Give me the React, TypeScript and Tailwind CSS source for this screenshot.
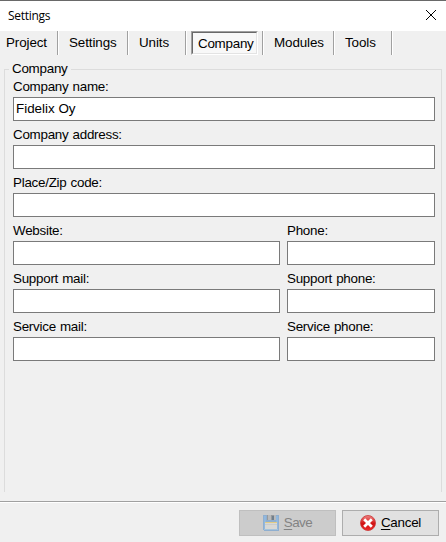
import React from 'react';

function Tab({ label, className }: { label: string; className: string }) {
  return (
    <button className={`h-6 shrink-0 border-r border-[#a0a0a0] pb-px text-left leading-[23px] shadow-[1px_0_0_#fff] ${className}`}>
      {label}
    </button>
  );
}

function Field({ label, value = '', className = '' }: { label: string; value?: string; className?: string }) {
  return (
    <label className={`flex h-12 flex-col ${className}`}>
      <span className="h-6 pt-1.5 leading-4 tracking-[-0.26px] [word-spacing:0.6px]">{label}</span>
      <input
        defaultValue={value}
        className="h-6 w-full border border-[#7a7a7a] bg-white px-0.5 pb-0.5 outline-none"
      />
    </label>
  );
}

function SaveIcon() {
  return (
    <svg width="16" height="16" viewBox="0 0 16 16" shapeRendering="crispEdges">
      <path d="M0 0h15l1 1v15H1l-1-1z" fill="#8fafd0" />
      <path d="M1 1h2v14H1zM13 1h2v14h-2z" fill="#91b8df" />
      <rect x="4" width="9" height="5" fill="#989a9c" />
      <rect x="5" width="3" height="5" fill="#b9babb" />
      <rect x="9" y="1" width="2" height="4" fill="#707f8d" />
      <rect x="11" width="2" height="5" fill="#b9babb" />
      <rect x="2" y="7" width="12" height="7" fill="#d8d8d5" />
      <rect x="2" y="7" width="12" height="1" fill="#e2cb83" />
      <rect x="2" y="9" width="12" height="1" fill="#c9cccd" />
      <rect x="1" y="14" width="14" height="1" fill="#a4c3dc" />
    </svg>
  );
}

function CancelIcon() {
  return (
    <svg width="16" height="16" viewBox="0 0 16 16">
      <defs>
        <linearGradient id="red" x1="0" y1="0" x2="0" y2="1">
          <stop offset="0" stopColor="#ee8585" />
          <stop offset=".4" stopColor="#dc3030" />
          <stop offset=".55" stopColor="#d01010" />
          <stop offset="1" stopColor="#f02c2c" />
        </linearGradient>
      </defs>
      <circle cx="8" cy="8" r="7.5" fill="url(#red)" stroke="#c93434" strokeWidth=".8" />
      <path d="M4.2 4.2l7.6 7.6M11.8 4.2l-7.6 7.6" stroke="#fff" strokeWidth="2.8" />
    </svg>
  );
}

export default function App() {
  return (
    <div className="flex h-[542px] w-[446px] flex-col overflow-hidden bg-[#f0f0f0] font-['Liberation_Sans',Arial,sans-serif] text-[13.4px] text-black">
      <header className="flex h-[31px] shrink-0 items-center justify-between border-t border-[#696969] bg-white pr-[9px] pl-2">
        <span className="font-['Open_Sans','Noto_Sans',sans-serif] text-[12px] tracking-[-0.28px]">Settings</span>
        <svg width="12" height="12" viewBox="0 0 12 12" className="mb-0.5">
          <path d="M1 1l10 10M11 1L1 11" stroke="#000" />
        </svg>
      </header>

      <nav className="flex h-6 shrink-0 tracking-[-0.1px]">
        <Tab label="Project" className="w-[58px] pl-1.5" />
        <Tab label="Settings" className="w-[70px] pl-[11px]" />
        <Tab label="Units" className="w-[58px] pl-[11px]" />
        <div className="flex h-6 w-[77px] shrink-0 border-r border-[#a0a0a0] pl-[5px] shadow-[1px_0_0_#fff]">
          <button className="h-6 w-[67px] border border-t-[#a0a0a0] border-r-white border-b-white border-l-[#a0a0a0] bg-[#f8f8f8]">
            <span className="block h-[22px] border border-t-[#696969] border-r-[#e3e3e3] border-b-[#e3e3e3] border-l-[#696969] pl-[5px] text-left leading-[21px] tracking-[-0.25px]">Company</span>
          </button>
        </div>
        <Tab label="Modules" className="w-[71px] pl-[11px]" />
        <Tab label="Tools" className="w-[58px] pl-[11px]" />
      </nav>

      <main className="flex h-[446px] shrink-0 flex-col px-1 pt-1.5 pb-[9px]">
        <fieldset className="h-[431px] w-[438px] border border-b-0 border-[#dcdcdc] pr-1.5 pl-2">
          <legend className="-ml-1 h-4 px-[3px] leading-4 tracking-[-0.25px]">Company</legend>
          <div className="-mt-1 grid w-[422px] grid-cols-[267px_148px] gap-x-[7px]">
            <Field label="Company name:" value="Fidelix Oy" className="col-span-2" />
            <Field label="Company address:" className="col-span-2" />
            <Field label="Place/Zip code:" className="col-span-2" />
            <Field label="Website:" />
            <Field label="Phone:" />
            <Field label="Support mail:" />
            <Field label="Support phone:" />
            <Field label="Service mail:" />
            <Field label="Service phone:" />
          </div>
        </fieldset>
      </main>

      <footer className="flex h-[41px] shrink-0 justify-end gap-1.5 border-t border-[#a0a0a0] pt-2 pr-[7px] shadow-[inset_0_1px_0_#fff]">
        <button disabled className="flex h-[26px] w-[97px] items-center justify-center gap-[5px] border border-[#bfbfbf] bg-[#cccccc] text-[#838383]">
          <SaveIcon />
          <span className="leading-4 tracking-[-0.5px]"><u className="underline-offset-2">S</u>ave</span>
        </button>
        <button className="flex h-[26px] w-[97px] items-center justify-center gap-[5px] border border-[#adadad] bg-[#e1e1e1]">
          <CancelIcon />
          <span className="leading-4 tracking-[-0.25px]"><u className="underline-offset-2">C</u>ancel</span>
        </button>
      </footer>
    </div>
  );
}
